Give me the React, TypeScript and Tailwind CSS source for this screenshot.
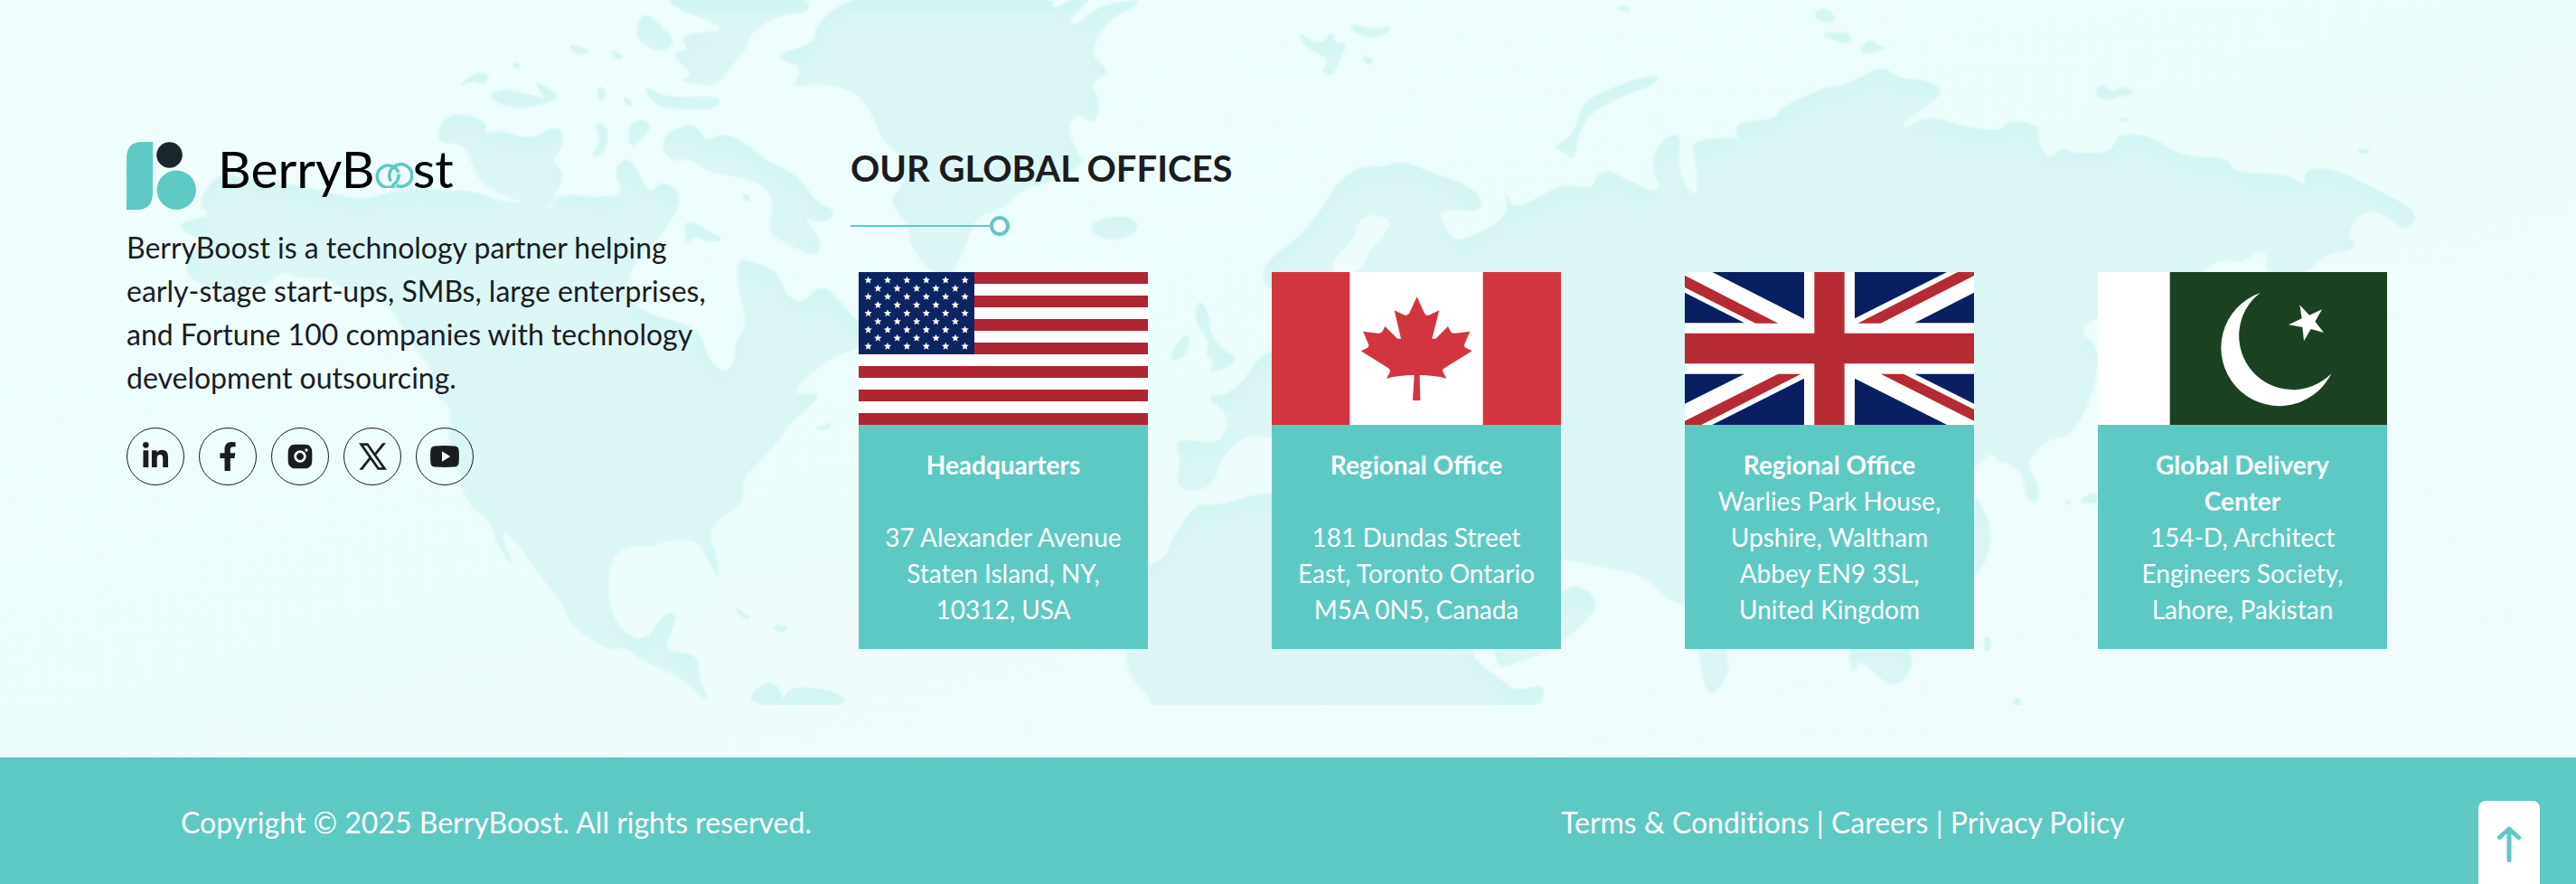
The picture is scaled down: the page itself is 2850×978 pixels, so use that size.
import type { ReactNode } from "react";
import { FaFacebookF, FaLinkedinIn } from "react-icons/fa";
import { RiInstagramFill } from "react-icons/ri";

/** Turns a list of corner points into a closed, softly rounded outline. */
function coast(points: string): string {
  const n = points.trim().split(/[\s,]+/).map(Number);
  const p: [number, number][] = [];
  for (let i = 0; i < n.length; i += 2) p.push([n[i], n[i + 1]]);
  const mid = (a: [number, number], b: [number, number]) => `${(a[0] + b[0]) / 2} ${(a[1] + b[1]) / 2}`;
  let d = `M${mid(p[p.length - 1], p[0])}`;
  p.forEach((q, i) => {
    d += `Q${q[0]} ${q[1]} ${mid(q, p[(i + 1) % p.length])}`;
  });
  return d + "Z";
}

const americas = [
  "360,440 400,372 440,388 540,400 600,418 660,435 700,422 760,405 815,415 860,412 920,440 990,438 1005,455 1015,420 1100,430 1140,420 1120,370 1145,340 1165,370 1175,400 1190,418 1205,395 1238,410 1240,445 1225,480 1200,520 1150,580 1145,640 1175,680 1230,695 1280,720 1290,775 1325,815 1342,780 1345,740 1365,700 1350,640 1345,562 1380,570 1420,590 1430,630 1460,665 1500,615 1530,650 1568,700 1600,740 1568,755 1530,770 1490,800 1440,855 1500,852 1480,880 1440,920 1420,960 1380,1010 1355,1040 1358,1090 1310,1130 1293,1160 1310,1210 1314,1260 1290,1210 1275,1172 1220,1170 1190,1188 1150,1182 1115,1210 1108,1290 1125,1355 1160,1390 1190,1378 1212,1330 1238,1328 1225,1370 1212,1412 1275,1418 1275,1470 1300,1532 1240,1465 1180,1440 1140,1400 1110,1412 1040,1355 1030,1310 985,1250 945,1175 912,1145 942,1240 905,1175 895,1130 850,1090 835,1000 818,960 825,880 795,860 790,800 760,760 730,700 705,655 640,640 600,600 540,605 518,585 480,625 440,620 410,650 400,625 350,610 338,580 350,550 375,518 345,510 325,485 360,475 385,465",
  "812,248 860,250 892,270 880,292 920,283 965,305 1025,268 1028,320 1005,350 1030,370 1020,410 1000,455 930,430 880,400 860,350 845,310 795,312",
  "888,212 915,193 945,200 975,208 1000,218 972,172 1020,205 1010,222 940,238",
  "835,190 865,158 895,160 885,185 860,175",
  "1090,183 1110,200 1095,225",
  "1138,205 1158,228 1143,230",
  "1175,182 1215,215 1315,205 1312,238 1220,236 1190,222",
  "1160,65 1178,25 1210,60 1235,90 1205,118 1168,90",
  "1215,-10 1480,-10 1475,30 1430,28 1370,70 1362,110 1330,150 1310,190 1235,175 1270,165 1222,115 1262,110 1238,75 1340,65 1235,20",
  "1082,266 1112,272 1105,335 1076,342 1100,305",
  "1148,262 1190,262 1180,295 1148,325",
  "1228,282 1270,265 1290,312 1320,286 1370,318 1400,350 1440,370 1470,400 1490,440 1530,460 1500,485 1465,468 1500,520 1492,560 1440,530 1400,505 1415,440 1390,395 1330,380 1290,372 1260,342 1225,352 1207,310",
  "1250,472 1290,500 1325,520 1290,526 1270,508 1252,536",
  "1355,425 1363,420 1371,430 1363,438",
  "1035,92 1085,112 1050,120",
  "1112,104 1143,125 1125,130",
  "935,140 945,134 950,142 944,150",
  "1410,1355 1440,1358 1430,1372 1418,1368",
  "1335,1312 1376,1342 1355,1340",
  "1485,928 1525,915 1505,935",
  "1362,1532 1385,1485 1420,1480 1430,1525 1440,1490 1500,1494 1535,1505 1548,1532",
];

const atlantic = [
  "-80,60 -50,25 0,-10 360,-10 350,26 400,-10 432,-12 380,45 402,56 432,15 530,-5 460,40 440,75 422,120 460,155 422,180 442,220 430,272 405,245 378,270 400,340 418,345 363,392 297,411 256,462 230,460 206,490 198,529 181,568 170,600 130,590 90,525 97,500 65,450 60,430 87,400 75,333 40,300 30,260 0,200 -70,180 -125,190 -100,145 -160,122 -80,95",
  "422,492 440,476 490,468 514,490 495,512 465,522 433,512",
  "800,66 840,102 865,66 870,97 892,92 880,125 865,168 843,155 862,130 818,105",
  "890,50 940,66 975,56 962,76 920,82",
  "920,116 944,135 925,142",
  "620,645 642,685 640,720 665,760 692,775 670,802 635,810 652,785 633,770 642,740 613,700",
  "580,745 604,720 600,770 566,788",
  "1268,320 1310,290 1318,225 1380,188 1458,160 1458,182 1390,208 1330,250 1312,300 1308,350 1282,325",
  "1380,15 1405,14 1410,22 1400,25",
  "740,580 760,552 800,520 850,450 870,400 920,358 955,365 990,348 1040,372 1110,400 1145,440 1120,462 1060,452 1068,490 1090,525 1125,510 1160,490 1188,458 1178,410 1195,455 1240,430 1290,398 1340,412 1350,375 1375,372 1400,390 1470,425 1445,350 1470,298 1503,290 1495,350 1510,412 1535,425 1528,340 1520,310 1560,300 1640,300 1640,1340 1480,1312 1440,1250 1370,1232 1285,1212 1200,1200 1200,960 754,950 710,942 662,990 650,1048 610,1070 578,1050 590,1000 576,950 640,962 665,955 678,900 632,858 670,858 700,830 718,800 740,765 780,760 780,640 740,620",
  "754,1065 700,1082 650,1098 615,1090 570,1175 560,1212 520,1230 500,1300 485,1420 500,1475 525,1500 545,1560 1235,1560 1258,1480 1200,1502 1170,1470 1130,1440 1110,1390 1100,1100",
  "1160,1380 1165,1445 1185,1447 1275,1402 1325,1352 1354,1308 1310,1262 1270,1300",
];

const asia = [
  "-40,250 20,262 42,250 30,217 100,215 125,185 200,155 240,150 300,115 330,140 380,142 415,160 380,190 335,222 342,228 385,205 450,225 520,234 530,213 588,222 585,250 605,286 630,262 645,272 720,272 730,237 790,240 850,280 930,278 945,308 1040,308 1075,332 1072,298 1130,300 1200,335 1284,378 1255,412 1220,380 1180,372 1148,415 1172,442 1110,450 1080,485 1000,490 1006,452 988,442 960,468 920,458 880,485 885,560 700,552 660,590 695,612 690,690 650,770 620,776 595,785 562,825 588,860 585,892 565,890 560,845 535,822 512,820 500,800 470,832 400,850 -40,850",
  "455,870 485,895 502,950 490,1000 455,1035",
  "235,1135 350,1135 358,1190 320,1222 280,1188 258,1170 248,1200",
  "-40,1110 10,1110 20,1175 18,1205 -20,1245",
  "488,1124 503,1140 488,1162",
  "536,1252 548,1234 558,1252",
  "172,30 195,12 218,32 205,42",
  "185,58 248,58 238,80 210,70",
  "254,98 278,68 290,80 314,86",
  "688,165 703,148 722,166 740,152 766,166 735,170 708,180",
  "732,212 742,208 752,213 742,216",
  "1166,268 1180,262 1194,269 1180,273",
  "632,892 645,888 648,895",
  "656,892 690,870 700,892",
];

const balticSea = "910,480 940,462 975,480 960,510 930,545 920,590 860,592 872,555 905,520";

function WorldMap() {
  return (
    <svg viewBox="0 0 2850 780" className="absolute inset-x-0 top-0 block w-full" aria-hidden="true">
      <defs>
        <filter id="coastline" x="0" y="0" width="2850" height="780" filterUnits="userSpaceOnUse" colorInterpolationFilters="sRGB">
          <feGaussianBlur in="SourceGraphic" stdDeviation="1.2" result="land" />
          <feGaussianBlur in="SourceAlpha" stdDeviation="9" result="wide" />
          <feOffset in="wide" dy="13" result="shifted" />
          <feFlood floodColor="#d3f5f3" />
          <feComposite operator="out" in2="shifted" />
          <feComposite operator="in" in2="land" result="edge" />
          <feMerge>
            <feMergeNode in="land" />
            <feMergeNode in="edge" />
          </feMerge>
        </filter>
      </defs>
      <g filter="url(#coastline)" fill="#dcf7f6">
        <g transform="scale(0.60587 0.5102)">
          {americas.map((p) => <path key={p} d={coast(p)} />)}
        </g>
        <g transform="translate(950 0) scale(0.60587 0.5102)">
          {atlantic.map((p) => <path key={p} d={coast(p)} />)}
        </g>
        <g transform="translate(1900 0) scale(0.60587 0.62372)">
          {asia.map((p) => <path key={p} d={coast(p)} />)}
        </g>
      </g>
      <path transform="translate(950 0) scale(0.60587 0.5102)" d={coast(balticSea)} fill="#eefcfc" />
    </svg>
  );
}

function Logo() {
  return (
    <a href="#home" aria-label="BerryBoost" className="flex h-[75px] items-start">
      <svg viewBox="0 0 77 75" className="h-[75px] w-[77px]" aria-hidden="true">
        <path d="M17 0H29V56Q29 75 12 75H0V18Q0 0 17 0Z" fill="#5ec9c3" />
        <circle cx="47.5" cy="14.5" r="14.3" fill="#1b262c" />
        <circle cx="55.2" cy="53.2" r="21.7" fill="#5ec9c3" />
      </svg>
      <span className="ml-6 flex items-baseline text-[57px] leading-[58px] text-black">
        BerryB
        <svg viewBox="0 0 42 28" className="h-7 w-[42px]" fill="none" stroke="#5ec9c3" strokeWidth="3.6" aria-hidden="true">
          <path d="M21.5 25.2A12.2 12.2 0 1 1 25.8 10.8" />
          <path d="M26 12.5A12.2 12.2 0 0 1 18.5 25.2" />
          <path d="M17.5 20.5A12.2 12.2 0 0 1 22.5 3.4A12.2 12.2 0 1 1 23.5 25.2" />
        </svg>
        st
      </span>
    </a>
  );
}

function YoutubeIcon() {
  return (
    <svg viewBox="0 0 32 24" className="h-6 w-8" aria-hidden="true">
      <path
        fillRule="evenodd"
        fill="currentColor"
        d="M5 .4Q16-.4 27 .4Q31.300.8 31.600 5Q32.200 12 31.600 19Q31.300 23.300 27 23.600Q16 24.400 5 23.600Q.8 23.300.4 19Q-.2 12 .4 5Q.8.800 5 .4ZM13 6.300V17.700L22.300 12Z"
      />
    </svg>
  );
}

function XIcon() {
  return (
    <svg viewBox="0 0 31 30" className="h-[30px] w-[31px]" aria-hidden="true">
      <path
        fillRule="evenodd"
        fill="currentColor"
        d="M0 .3H10.200L17.700 11 26.200.3H30L19.300 13.300 31 29.700H20.800L12.800 18.500 4.200 29.700H.4L11.200 16.300ZM5.200 3L22.300 27.200H26L8.900 3Z"
      />
    </svg>
  );
}

const socials: { name: string; icon: ReactNode }[] = [
  { name: "LinkedIn", icon: <FaLinkedinIn size={32} /> },
  { name: "Facebook", icon: <FaFacebookF size={32} /> },
  { name: "Instagram", icon: <RiInstagramFill size={32} /> },
  { name: "X", icon: <XIcon /> },
  { name: "YouTube", icon: <YoutubeIcon /> },
];

function star(cx: number, cy: number, r: number): string {
  return Array.from({ length: 10 }, (_, i) => {
    const a = (Math.PI / 5) * i - Math.PI / 2;
    const k = i % 2 ? r * 0.45 : r;
    return `${cx + Math.cos(a) * k},${cy + Math.sin(a) * k}`;
  }).join(" ");
}

const flagClass = "block w-full";

function UsaFlag() {
  return (
    <svg viewBox="0 0 320 169" className={flagClass} role="img" aria-label="United States flag">
      <rect width="320" height="169" fill="#fff" />
      {[0, 1, 2, 3, 4, 5, 6].map((i) => (
        <rect key={i} y={i * 26} width="320" height="13" fill="#ae2632" />
      ))}
      <rect width="128" height="91" fill="#0c2461" />
      {Array.from({ length: 9 }, (_, row) =>
        Array.from({ length: row % 2 ? 5 : 6 }, (_, col) => (
          <polygon
            key={`${row}-${col}`}
            points={star(10.6 + col * 21.4 + (row % 2 ? 10.7 : 0), 9 + row * 9.15, 4.4)}
            fill="#fff"
          />
        ))
      )}
    </svg>
  );
}

function CanadaFlag() {
  return (
    <svg viewBox="21 33 960 507" className={flagClass} role="img" aria-label="Canada flag">
      <rect x="21" y="33" width="960" height="507" fill="#d3353f" />
      <rect x="280" y="33" width="442" height="507" fill="#fff" />
      <path
        fill="#d3353f"
        d="M503 115L526 166Q533 182 546 175L577 160L553 254H565L606 213L615 231Q618 238 630 236L679 230L661 272Q658 282 666 285L686 295L594 352Q586 357 589 364L601 386Q560 375 512 375L514 459H489L494 375Q445 375 402 386L414 364Q415 357 408 352L317 295L338 285Q345 281 342 272L324 230L372 236Q384 237 388 230L397 213L438 254H450L428 160L459 175Q471 181 478 169Z"
      />
    </svg>
  );
}

function UkFlag() {
  return (
    <svg viewBox="42 33 960 507" className={flagClass} role="img" aria-label="United Kingdom flag">
      <rect x="42" y="33" width="960" height="507" fill="#fff" />
      <path
        fill="#0a1f62"
        d="M133 33H438V188ZM42 101L240 202H42ZM606 33H912L606 187ZM1002 101V202H805ZM42 371H240L42 470ZM438 386V540H133ZM606 386L912 540H606ZM805 371H1002V470Z"
      />
      <path
        fill="#b62b33"
        d="M472 33H572V236H1002V337H572V540H472V337H42V236H472ZM42 44L352 203H277L42 84ZM948 33H1002V45L692 203H616ZM352 371H428L97 540H42V527ZM692 371H768L1002 489V527Z"
      />
    </svg>
  );
}

function PakistanFlag() {
  return (
    <svg viewBox="33 33 960 507" className={flagClass} role="img" aria-label="Pakistan flag">
      <rect x="33" y="33" width="960" height="507" fill="#1b4122" />
      <rect x="33" y="33" width="239" height="507" fill="#fff" />
      <path fill="#fff" d="M572 102A193 193 0 1 0 808 370A179 179 0 1 1 572 102Z" />
      <polygon fill="#fff" points="703,142 735,176 777,157 754,197 783,234 740,222 717,262 712,216 666,208 710,187" />
    </svg>
  );
}

const offices: { id: string; flag: ReactNode; title: string[]; gap: boolean; address: string[] }[] = [
  {
    id: "us",
    flag: <UsaFlag />,
    title: ["Headquarters"],
    gap: true,
    address: ["37 Alexander Avenue", "Staten Island, NY,", "10312, USA"],
  },
  {
    id: "ca",
    flag: <CanadaFlag />,
    title: ["Regional Office"],
    gap: true,
    address: ["181 Dundas Street", "East, Toronto Ontario", "M5A 0N5, Canada"],
  },
  {
    id: "uk",
    flag: <UkFlag />,
    title: ["Regional Office"],
    gap: false,
    address: ["Warlies Park House,", "Upshire, Waltham", "Abbey EN9 3SL,", "United Kingdom"],
  },
  {
    id: "pk",
    flag: <PakistanFlag />,
    title: ["Global Delivery", "Center"],
    gap: false,
    address: ["154-D, Architect", "Engineers Society,", "Lahore, Pakistan"],
  },
];

function Lines({ lines }: { lines: string[] }) {
  return (
    <>
      {lines.map((line) => (
        <span key={line} className="block">{line}</span>
      ))}
    </>
  );
}

export default function App() {
  return (
    <footer className="flex min-h-screen flex-col bg-[#effdfd] font-['Lato','Open_Sans',sans-serif] text-[#1c1c1f]">
      <div className="relative flex-1 overflow-hidden bg-linear-to-br from-[#effdfd] via-[#edfdfc] to-[#f1fcfc]">
        <WorldMap />
        <div className="relative flex pt-[157px] pr-[209px] pb-[120px] pl-[140px]">
          <section className="w-[801px] shrink-0">
            <Logo />
            <p className="mt-[18px] text-[32px] leading-[48px]">
              BerryBoost is a technology partner helping
              <br />
              early-stage start-ups, SMBs, large enterprises,
              <br />
              and Fortune 100 companies with technology
              <br />
              development outsourcing.
            </p>
            <ul className="mt-[31px] flex gap-4">
              {socials.map((s) => (
                <li key={s.name}>
                  <a
                    href={`#${s.name.toLowerCase()}`}
                    aria-label={s.name}
                    className="flex size-16 items-center justify-center rounded-full border border-[#1c1c1f]"
                  >
                    {s.icon}
                  </a>
                </li>
              ))}
            </ul>
          </section>

          <section className="min-w-0 flex-1">
            <h2 className="mt-1 text-[40px] leading-[50px] font-bold">OUR GLOBAL OFFICES</h2>
            <div className="mt-7 flex items-center">
              <span className="h-[2px] w-[154px] bg-[#5ec9c3]" />
              <span className="size-[22px] rounded-full border-4 border-[#5ec9c3] bg-white" />
            </div>
            <div className="mt-10 grid grid-cols-4 gap-[137px] pl-[9px]">
              {offices.map((o) => (
                <article key={o.id} className="bg-[#5ec9c3] text-center text-[28px] leading-[40px] text-white">
                  {o.flag}
                  <div className="py-6 whitespace-nowrap">
                    <h3 className="font-bold"><Lines lines={o.title} /></h3>
                    <address className={o.gap ? "pt-10 not-italic" : "not-italic"}>
                      <Lines lines={o.address} />
                    </address>
                  </div>
                </article>
              ))}
            </div>
          </section>
        </div>
      </div>

      <div className="flex bg-[#5ec9c3] pt-12 pb-11 pl-[200px] text-[32px] leading-[48px] text-white">
        <p className="w-[1527px] shrink-0">Copyright © 2025 BerryBoost. All rights reserved.</p>
        <nav className="whitespace-nowrap [font-variant-ligatures:none]">
          <a href="#terms">Terms &amp; Conditions</a> | <a href="#careers">Careers</a> | <a href="#privacy">Privacy Policy</a>
        </nav>
      </div>

      <button
        type="button"
        aria-label="Back to top"
        className="fixed right-10 bottom-0 flex h-[92px] w-[68px] justify-center rounded-t-lg bg-white pt-7 text-[#5ec9c3]"
      >
        <svg viewBox="0 0 26 40" className="h-10 w-[26px]" fill="none" stroke="currentColor" strokeWidth="5" strokeLinecap="round" strokeLinejoin="round" aria-hidden="true">
          <path d="M13 3V37.500M2.500 12.500L13 3L23.500 12.500" />
        </svg>
      </button>
    </footer>
  );
}
